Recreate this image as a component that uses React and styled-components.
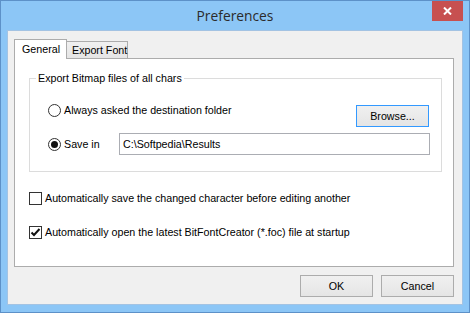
import styled, { createGlobalStyle } from 'styled-components';

const GlobalStyle = createGlobalStyle`
  html, body {
    margin: 0;
    padding: 0;
    background: #ffffff;
  }
  body {
    font-family: 'Liberation Sans', Arial, sans-serif;
    font-size: 10.7px;
    color: #000000;
  }
  * {
    box-sizing: border-box;
  }
`;

const Window = styled.div`
  width: 470px;
  height: 313px;
  display: flex;
  flex-direction: column;
  padding: 0 6px 7px 6px;
  background: #8cc6f6;
  border: 1px solid #5d91c8;
`;

const TitleBar = styled.div`
  height: 29px;
  display: grid;
  grid-template-columns: 1fr auto 1fr;
`;

const Title = styled.div`
  grid-column: 2;
  align-self: center;
  font-family: 'Open Sans', 'Noto Sans', sans-serif;
  font-size: 13.8px;
  color: #2b2b2b;
  line-height: 18px;
`;

const CloseButton = styled.div`
  grid-column: 3;
  justify-self: end;
  align-self: start;
  width: 31px;
  height: 20px;
  display: flex;
  align-items: center;
  justify-content: center;
  background: #c75050;
`;

const Client = styled.div`
  flex: 1;
  display: flex;
  flex-direction: column;
  padding: 8px 8px 7px 6px;
  background: #f0f0f0;
  border: 1px solid #a3c3e3;
`;

const TabStrip = styled.div`
  display: flex;
  align-items: flex-end;
  height: 19px;
`;

const Tab = styled.div`
  position: relative;
  z-index: ${(p) => (p.active ? 1 : 0)};
  width: ${(p) => p.width}px;
  height: ${(p) => (p.active ? 20 : 17)}px;
  margin-bottom: ${(p) => (p.active ? -1 : 0)}px;
  display: flex;
  align-items: center;
  white-space: nowrap;
  padding-left: ${(p) => p.pad}px;
  padding-bottom: ${(p) => (p.active ? 2 : 0)}px;
  background: ${(p) =>
    p.active ? '#ffffff' : 'linear-gradient(#f0f0f0, #e5e5e5)'};
  border: 1px solid #acacac;
  border-bottom: none;
  border-left: ${(p) => (p.joined ? 'none' : '1px solid #acacac')};
`;

const Panel = styled.div`
  flex: 1;
  display: flex;
  flex-direction: column;
  padding: 13px 11px 0 14px;
  background: #ffffff;
  border: 1px solid #acacac;
`;

const GroupBox = styled.fieldset`
  margin: 0;
  padding: 19px 11px 16px 6px;
  border: 1px solid #dcdcdc;
  min-width: 0;
`;

const Legend = styled.legend`
  padding: 0 2px;
  line-height: 13px;
`;

const Options = styled.div`
  display: flex;
  flex-direction: column;
  gap: 6px;
  margin-left: 12px;
`;

const OptionRow = styled.div`
  display: flex;
  align-items: ${(p) => (p.top ? 'flex-start' : 'center')};
`;

const RadioOption = styled.label`
  display: flex;
  align-items: center;
  gap: 3px;
  height: 13px;
  line-height: 13px;
  white-space: nowrap;
  width: ${(p) => (p.width ? `${p.width}px` : 'auto')};
`;

const RadioCircle = styled.span`
  width: 13px;
  height: 13px;
  flex: none;
  display: flex;
  align-items: center;
  justify-content: center;
  border: 1px solid #333333;
  border-radius: 50%;
  background: #ffffff;

  &::after {
    content: '';
    display: ${(p) => (p.checked ? 'block' : 'none')};
    width: 7px;
    height: 7px;
    border-radius: 50%;
    background: #111111;
  }
`;

const Button = styled.div`
  width: 73px;
  height: 22px;
  display: flex;
  align-items: center;
  justify-content: center;
  margin-left: ${(p) => (p.push ? 'auto' : '0')};
  margin-top: ${(p) => p.mt || 0}px;
  margin-right: ${(p) => p.mr || 0}px;
  background: linear-gradient(#f0f0f0, #e5e5e5);
  border: 1px solid ${(p) => (p.focused ? '#3399ff' : '#acacac')};
`;

const TextBox = styled.div`
  flex: 1;
  height: 22px;
  display: flex;
  align-items: center;
  padding-left: 3px;
  background: #ffffff;
  border: 1px solid #abadb3;
`;

const CheckRow = styled.label`
  display: flex;
  align-items: center;
  gap: 3px;
  height: 13px;
  line-height: 13px;
  margin-top: ${(p) => p.mt}px;
  white-space: nowrap;
`;

const CheckBox = styled.span`
  width: 13px;
  height: 13px;
  flex: none;
  display: flex;
  align-items: center;
  justify-content: center;
  border: 1px solid #333333;
  background: #ffffff;
`;

const ButtonBar = styled.div`
  display: flex;
  justify-content: flex-end;
  gap: 8px;
  margin-top: 8px;
`;

const Radio = ({ checked, width, children }) => (
  <RadioOption width={width}>
    <RadioCircle checked={checked} />
    {children}
  </RadioOption>
);

const Check = ({ checked, mt, children }) => (
  <CheckRow mt={mt}>
    <CheckBox>
      {checked && (
        <svg width="11" height="11" viewBox="0 0 11 11">
          <path
            d="M1.5 5.5 L4 8 L9.5 2"
            fill="none"
            stroke="#111"
            strokeWidth="2"
          />
        </svg>
      )}
    </CheckBox>
    {children}
  </CheckRow>
);

export default function App() {
  return (
    <>
      <GlobalStyle />
      <Window>
        <TitleBar>
          <Title>Preferences</Title>
          <CloseButton>
            <svg width="9" height="8" viewBox="0 0 9 8">
              <path
                d="M1 0.5 L8 7.5 M8 0.5 L1 7.5"
                stroke="#ffffff"
                strokeWidth="2"
              />
            </svg>
          </CloseButton>
        </TitleBar>
        <Client>
          <TabStrip>
            <Tab active width={53} pad={7}>
              General
            </Tab>
            <Tab joined width={61} pad={5}>
              Export Font
            </Tab>
          </TabStrip>
          <Panel>
            <GroupBox>
              <Legend>Export Bitmap files of all chars</Legend>
              <Options>
                <OptionRow top>
                  <Radio>Always asked the destination folder</Radio>
                  <Button push focused mt={1} mr={1}>
                    Browse...
                  </Button>
                </OptionRow>
                <OptionRow>
                  <Radio checked width={71}>
                    Save in
                  </Radio>
                  <TextBox>C:\Softpedia\Results</TextBox>
                </OptionRow>
              </Options>
            </GroupBox>
            <Check mt={20}>
              Automatically save the changed character before editing another
            </Check>
            <Check checked mt={21}>
              Automatically open the latest BitFontCreator (*.foc) file at startup
            </Check>
          </Panel>
          <ButtonBar>
            <Button>OK</Button>
            <Button>Cancel</Button>
          </ButtonBar>
        </Client>
      </Window>
    </>
  );
}
